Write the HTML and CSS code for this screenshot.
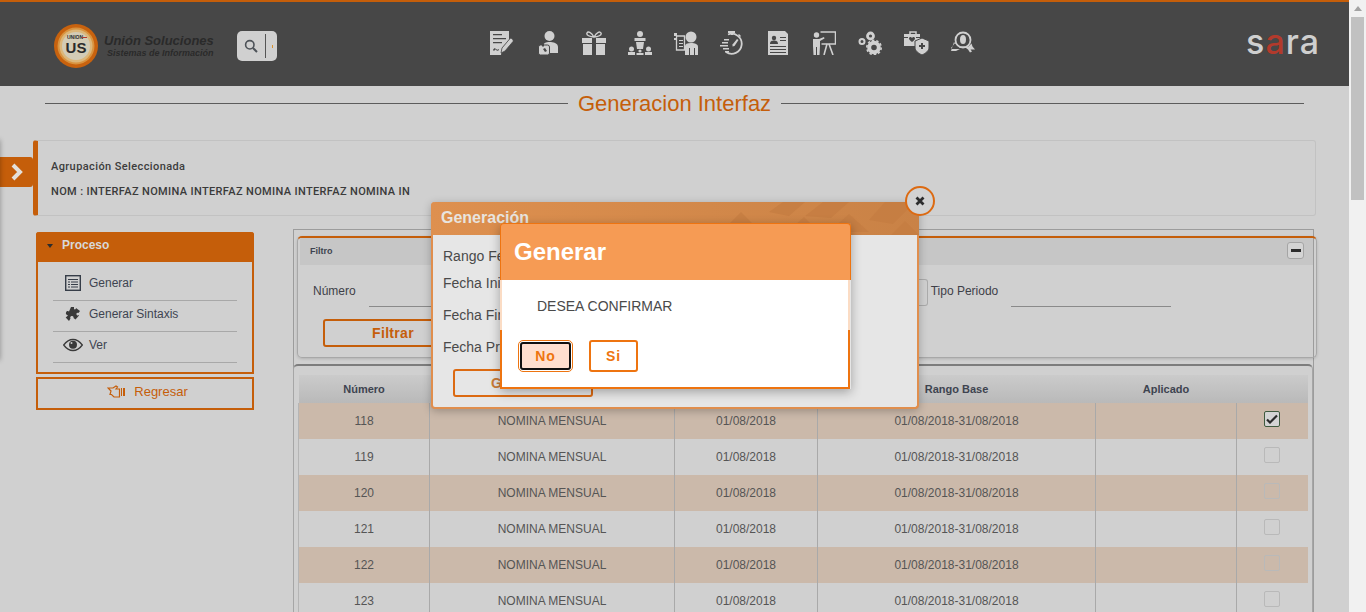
FILE: index.html
```html
<!DOCTYPE html>
<html lang="es">
<head>
<meta charset="utf-8">
<title>Generacion Interfaz</title>
<link rel="stylesheet" href="styles.css">
</head>
<body>
<div class="page">
  <header class="topbar">
    <div class="brand">
      <svg class="brand-mark" width="46" height="46" viewBox="0 0 46 46">
        <circle cx="23" cy="23" r="22" fill="#c8620e"/>
        <circle cx="23" cy="23" r="18.500" fill="#d9933f"/>
        <circle cx="23" cy="23" r="16.500" fill="#dcb77a"/>
        <circle cx="23" cy="23" r="14" fill="#d3ccb6"/>
        <text x="22" y="15.500" class="mark-small">UNION</text>
        <path d="M29 14h5v1h-5z" fill="#b33a2c"/>
        <text x="23" y="30" class="mark-big">US</text>
      </svg>
      <div class="brand-text">
        <div class="brand-name">Unión Soluciones</div>
        <div class="brand-sub">Sistemas de Información</div>
      </div>
    </div>
    <div class="search">
      <svg width="14" height="14" viewBox="0 0 14 14"><circle cx="5.800" cy="5.800" r="4.200" fill="none" stroke="#4d5258" stroke-width="1.600"/><path d="M9 9l4 4" stroke="#4d5258" stroke-width="2"/></svg>
      <span class="search-sep"></span>
      <span class="search-dot"></span>
    </div>
    <nav class="nav">
      <svg width="24" height="24" viewBox="0 0 24 24"><path class="ic" d="M0 0h19v9l-7 8-1 7H0z"/><path class="cut" d="M3 3h9v1.200H3zM3 7h13v1.200H3zM3 11h9v1.200H3zM3 19c1-2 2-2 3-1s2 1 3 0v1c-1 1-2 1-3 0s-1 0-2 1z"/><path class="ic" stroke="#474747" stroke-width=".8" d="M12 17L20 7.500c1-1 4 1.500 3 3L15 20l-4 2z"/></svg>
      <svg width="24" height="24" viewBox="0 0 24 24"><circle class="ic" cx="13.500" cy="5" r="5"/><path class="ic" d="M7 22V15c0-3 3-4 6.500-4s8.500 1 8.500 5v6z"/><rect x="2.500" y="14" width="11" height="10" rx="2" class="ic" stroke="#474747"/><path class="cut" d="M6 12.500h2v3H6zM7 18l2-1 2 3-2 1z"/></svg>
      <svg width="24" height="24" viewBox="0 0 24 24"><path class="ic" d="M0 7h10v5H0zM14 7h10v5H14zM1 13h9v11H1zM14 13h9v11H14z"/><path d="M12 6C9 1 6 0 5 2s3 4 7 4c4 0 8-2 7-4s-4-1-7 4z" fill="none" stroke="#d0d0d0" stroke-width="1.400"/></svg>
      <svg width="24" height="24" viewBox="0 0 24 24"><circle class="ic" cx="12" cy="3" r="3"/><path class="ic" d="M6.500 7h11v3h-11zM8 11h8l-1 7H9z"/><circle class="ic" cx="3.500" cy="18" r="2.500"/><circle class="ic" cx="20.500" cy="18" r="2.500"/><circle class="ic" cx="12" cy="20" r="1.600"/><path class="ic" d="M0 21h7v3H0zM8.500 22h7v2h-7zM17 21h7v3h-7z"/></svg>
      <svg width="24" height="24" viewBox="0 0 24 24"><circle class="ic" cx="17" cy="6" r="5.500"/><path class="ic" d="M11 24V15c0-2 2-3 6-3s7 1 7 4v8z"/><path d="M2.500 5h8v14h-8z" fill="none" stroke="#d0d0d0" stroke-width="1.300"/><path class="ic" d="M0 2h3v3H0zM0 7h3v2H0zM5 9h4v1H5zM5 12h4v1H5zM5 15h4v1H5z"/><path class="cut" d="M15 17h1v7h-1zM20 17h1v7h-1z"/></svg>
      <svg width="24" height="24" viewBox="0 0 24 24"><path d="M8 3.500A10 10 0 1 1 6 21" fill="none" stroke="#d0d0d0" stroke-width="1.800"/><path class="ic" d="M8 0h7v2H8zM11 2h2v2h-2zM19 3l2 2-1 1-2-2zM0 14h8v1.500H0zM2 11h6v1.500H2zM3 17h6v1.500H3zM4 8h5v1.500H4zM5 20h4v1.500H5z"/><path class="ic" d="M17 8l1.500 1-4 6-2 .5 0-2z"/></svg>
      <svg class="nav-narrow" width="20" height="24" viewBox="0 0 20 24"><path class="ic" d="M0 0h17l3 3v21H0z"/><circle class="cut" cx="6" cy="7" r="2.200"/><path class="cut" d="M2 13c0-3 2-3.500 4-3.500s4 .5 4 3.500zM12 6h6v1h-6zM12 9h6v1h-6zM2 15h16v1H2zM2 18h16v1H2zM2 21h16v1H2z"/></svg>
      <svg width="24" height="24" viewBox="0 0 24 24"><circle class="ic" cx="4.500" cy="4" r="2.700"/><path class="ic" d="M1 8h6l5-2 .5 1.500L8 10v5l-.5 9H5v-8H4v8H1.500L1 15z"/><path d="M8.500 1h15v12h-14" fill="none" stroke="#d0d0d0" stroke-width="1.500"/><path d="M15 13l-3 11M17 13l4 11" stroke="#d0d0d0" stroke-width="1.600"/></svg>
      <svg width="24" height="24" viewBox="0 0 24 24"><circle cx="12.500" cy="5" r="3" fill="none" stroke="#d0d0d0" stroke-width="2.800"/><circle cx="4" cy="10.500" r="2.500" fill="none" stroke="#d0d0d0" stroke-width="2"/><circle cx="16" cy="16.500" r="4.800" fill="none" stroke="#d0d0d0" stroke-width="4"/><circle cx="16" cy="16.500" r="7.200" fill="none" stroke="#d0d0d0" stroke-width="1.600" stroke-dasharray="2.500 2"/></svg>
      <svg width="25" height="24" viewBox="0 0 25 24"><path d="M6 3V1h6v2" fill="none" stroke="#d0d0d0" stroke-width="1.500"/><path class="ic" d="M0 3h16v12H0z"/><path class="cut" d="M8 11C6 9.500 5 8.500 5 7.500 5 6 7.200 5.500 8 7c.8-1.500 3-1 3 .5 0 1-1 2-3 3.500zM0 6h4v1H0zM12 6h4v1h-4z"/><path class="ic" stroke="#474747" d="M18 7l7 3v6c0 4-3 6-7 8-4-2-7-4-7-8v-6z"/><path class="cut" d="M17 12h2v2h2v2h-2v2h-2v-2h-2v-2h2z"/></svg>
      <svg width="24" height="24" viewBox="0 0 24 24"><circle cx="12" cy="9" r="7.500" fill="none" stroke="#d0d0d0" stroke-width="1.800"/><ellipse class="ic" cx="12" cy="8.500" rx="3" ry="4.500"/><path class="ic" d="M3 11l2.500 3 3.500 3h6l2 1.500 2 3 2-1-1.500-2H24l-2.500-3-1-3-3 3H7L4.500 11.500 0 17l1 1h5l3 0-4 2-5 0z"/></svg>
    </nav>
    <div class="sora">s<span class="sora-a">a</span>ra</div>
  </header>

  <div class="title-row">
    <span class="rule"></span>
    <h1 class="title">Generacion Interfaz</h1>
    <span class="rule"></span>
  </div>

  <section class="selection">
    <p class="sel-label">Agrupación Seleccionada</p>
    <p class="sel-value">NOM : INTERFAZ NOMINA INTERFAZ NOMINA INTERFAZ NOMINA IN</p>
  </section>

  <div class="content">
    <aside class="side">
      <div class="process">
        <div class="process-head"><span class="caret"></span>Proceso</div>
        <ul class="process-list">
          <li class="process-item">
            <svg width="16" height="16" viewBox="0 0 16 16"><rect x=".7" y=".7" width="14.600" height="14.600" fill="none" stroke="#363d48" stroke-width="1.400"/><path d="M3 4h10v1H3zM3 6.500h2v1H3zM6 6.500h7v1H6zM3 9h2v1H3zM6 9h7v1H6zM3 11.500h2v1H3zM6 11.500h7v1H6z" fill="#363d48"/></svg>
            Generar
          </li>
          <li class="process-item">
            <svg width="16" height="16" viewBox="0 0 16 16"><path d="M6 1l3 0 0 2c1 1 2 0 2-1l4 3-1.500 2c-1-.8-2.500 0-2 1.500s2 1 2.500.5l0 .5-3.500 4-2-1.500c.5-1-.5-2.500-2-2s-1.500 2-1 2.500L4 15 .7 11.500 3 9.500c-1-.5-2.700-1-2-3s2.500-1.500 3-1z" fill="#3a3a3a"/></svg>
            Generar Sintaxis
          </li>
          <li class="process-item">
            <svg class="eye" width="20" height="14" viewBox="0 0 20 14"><path d="M.7 7C4 2.500 7 1.500 10 1.500S16 2.500 19.300 7C16 11.500 13 12.500 10 12.500S4 11.500 .7 7z" fill="none" stroke="#3a3a3a" stroke-width="1.300"/><circle cx="10" cy="6.800" r="4" fill="#3a3a3a"/><circle cx="8.500" cy="5" r="1" fill="#ccc"/></svg>
            Ver
          </li>
        </ul>
      </div>
      <button class="back" type="button">
        <svg width="18" height="13" viewBox="0 0 18 13"><path d="M1 3h5l3-2 1.500 1L9 4h3.500v8H7L4.500 9.500H3L4 6z" fill="none" stroke="#c55e0a" stroke-width="1.200"/><path d="M14 3h1v8h-1zM16 3h2v8h-2z" fill="#c55e0a"/></svg>
        Regresar
      </button>
    </aside>

    <main class="work">
      <section class="filter">
        <div class="filter-head">
          <span class="filter-title">Filtro</span>
          <button class="collapse" type="button"><span class="minus"></span></button>
        </div>
        <div class="filter-row">
          <label class="f-label">Número</label>
          <span class="f-line f-line-num"></span>
          <span class="f-select"></span>
          <label class="f-label">Tipo Periodo</label>
          <span class="f-line f-line-tipo"></span>
        </div>
        <button class="filter-btn" type="button">Filtrar</button>
      </section>

      <section class="grid-panel">
        <table class="grid">
          <colgroup>
            <col class="c1"><col class="c2"><col class="c3"><col class="c4"><col class="c5"><col class="c6">
          </colgroup>
          <thead>
            <tr><th>Número</th><th></th><th></th><th>Rango Base</th><th>Aplicado</th><th></th></tr>
          </thead>
          <tbody>
            <tr class="alt"><td>118</td><td>NOMINA MENSUAL</td><td>01/08/2018</td><td>01/08/2018-31/08/2018</td><td></td><td><span class="check on"><svg width="12" height="10" viewBox="0 0 12 10"><path d="M1 5.500l3 3L11 1.500" fill="none" stroke="#2b2b2b" stroke-width="2.200"/></svg></span></td></tr>
            <tr><td>119</td><td>NOMINA MENSUAL</td><td>01/08/2018</td><td>01/08/2018-31/08/2018</td><td></td><td><span class="check"></span></td></tr>
            <tr class="alt"><td>120</td><td>NOMINA MENSUAL</td><td>01/08/2018</td><td>01/08/2018-31/08/2018</td><td></td><td><span class="check"></span></td></tr>
            <tr><td>121</td><td>NOMINA MENSUAL</td><td>01/08/2018</td><td>01/08/2018-31/08/2018</td><td></td><td><span class="check"></span></td></tr>
            <tr class="alt"><td>122</td><td>NOMINA MENSUAL</td><td>01/08/2018</td><td>01/08/2018-31/08/2018</td><td></td><td><span class="check"></span></td></tr>
            <tr><td>123</td><td>NOMINA MENSUAL</td><td>01/08/2018</td><td>01/08/2018-31/08/2018</td><td></td><td><span class="check"></span></td></tr>
          </tbody>
        </table>
      </section>
    </main>
  </div>

  <button class="side-tab" type="button"><svg width="14" height="18" viewBox="0 0 14 18"><path d="M3 2l7 7-7 7" fill="none" stroke="#e4e0da" stroke-width="4"/></svg></button>
  <span class="side-shadow"></span>

  <div class="dialog">
    <div class="dialog-head">
      <svg class="dialog-pattern" width="340" height="33" viewBox="0 0 340 33">
        <path d="M150 22l12-12 12 12-12 12zM190 10l14-10h22l-16 14zM226 14l18-14h26l-18 16zM250 30l20-18 20 18zM290 18l16-18h30l-22 22zM205 33l20-18 18 18zM312 33l14-14 14 14z" fill="#c47c42" opacity=".75"/>
      </svg>
      <span class="dialog-title">Generación</span>
    </div>
    <div class="dialog-body">
      <div class="dlg-line dlg-first">Rango Fecha</div>
      <div class="dlg-line">Fecha Inicio</div>
      <div class="dlg-line dlg-gap">Fecha Fin</div>
      <div class="dlg-line dlg-gap">Fecha Proceso</div>
      <button class="dlg-btn" type="button">Generar</button>
    </div>
  </div>
  <button class="dialog-close" type="button"><svg width="10" height="10" viewBox="0 0 10 10"><path d="M1.500 1.500l7 7M8.500 1.500l-7 7" stroke="#2d2d2d" stroke-width="2.800"/></svg></button>

  <div class="confirm">
    <div class="confirm-head">Generar</div>
    <div class="confirm-body">
      <p class="confirm-text">DESEA CONFIRMAR</p>
      <div class="confirm-actions">
        <button class="cbtn cbtn-focus" type="button">No</button>
        <button class="cbtn" type="button">Si</button>
      </div>
    </div>
  </div>
</div>
<div class="scrollbar">
  <span class="sb-arrow"></span>
  <span class="sb-thumb"></span>
</div>
</body>
</html>
```
FILE: styles.css
```css
* { box-sizing: border-box; }
html, body { margin: 0; height: 612px; overflow: hidden; }
body { display: flex; background: #d0d0d0; font-family: "Liberation Sans", Arial, sans-serif; color: #3c3c3c; }
p, h1, ul { margin: 0; padding: 0; }
button { font-family: inherit; padding: 0; background: none; }

.page { position: relative; width: 1349px; height: 612px; flex: none; overflow: hidden; }

.scrollbar { width: 17px; height: 612px; flex: none; background: #f1f1f1; display: flex; flex-direction: column; align-items: center; }
.sb-arrow { margin-top: 6px; border: 4px solid transparent; border-top: 0; border-bottom: 5px solid #a3a3a3; }
.sb-thumb { margin-top: 6px; width: 13px; height: 183px; background: #c1c1c1; }

.topbar { height: 86px; background: #474747; border-top: 2px solid #c55e0a; display: flex; align-items: flex-start; }
.brand { display: flex; margin: 21px 0 0 53px; width: 184px; }
.brand-mark { flex: none; }
.mark-small { font: bold 5px "Liberation Sans", sans-serif; fill: #2b2b2b; text-anchor: middle; }
.mark-big { font: bold 15px "Liberation Sans", sans-serif; fill: #2b2b2b; text-anchor: middle; }
.brand-text { margin: 10px 0 0 5px; color: #2a2a2a; font-style: italic; font-weight: bold; white-space: nowrap; }
.brand-name { font-size: 13px; line-height: 15px; }
.brand-sub { font-size: 9px; line-height: 10px; margin-left: 3px; }

.search { margin-top: 29px; width: 40px; height: 30px; background: #d0d0d0; border-radius: 5px; display: flex; align-items: center; padding-left: 7px; }
.search-sep { width: 1px; height: 24px; background: #555; margin-left: 7px; }
.search-dot { width: 1px; height: 3px; background: #d9902c; margin-left: 6px; }

.nav { display: flex; gap: 22px; align-items: center; margin: 29px 0 0 213px; height: 24px; }
.nav svg { flex: none; }
.nav .nav-narrow { margin: 0 2px; }
.ic { fill: #d0d0d0; }
.cut { fill: #474747; }

.sora { margin: 20px 29px 0 auto; font: 500 34px/40px Inter, "Liberation Sans", sans-serif; letter-spacing: 1px; color: #cfcfcf; }
.sora-a { color: #b33a2c; }

.title-row { display: flex; align-items: center; gap: 10px; padding: 0 45px; height: 35px; }
.rule { flex: 1; height: 1px; background: #5c5c5c; }
.title { font-size: 22px; font-weight: normal; color: #c55e0a; line-height: 35px; white-space: nowrap; }

.selection { margin: 19px 0 0 33px; width: 1283px; height: 76px; border: 1px solid #c2c2c2; border-left: 5px solid #c55e0a; border-radius: 3px; padding: 18px 0 0 13px; }
.sel-label { font: 500 11px/16px Roboto, sans-serif; letter-spacing: .4px; color: #3d3d3d; }
.sel-value { margin-top: 9px; font: 500 11px/16px Roboto, sans-serif; letter-spacing: .35px; color: #3a3a3a; }

.content { display: flex; gap: 39px; padding-left: 36px; margin-top: 13px; }
.side { width: 218px; flex: none; padding-top: 3px; }
.process { border: 2px solid #c55e0a; border-top: 0; height: 142px; border-radius: 3px 3px 0 0; }
.process-head { margin: 0 -2px; height: 30px; background: #c55e0a; color: #d8d8d8; font-weight: bold; font-size: 12px; line-height: 27px; padding-left: 11px; border-radius: 3px 3px 0 0; display: flex; align-items: flex-start; }
.caret { width: 0; height: 0; margin: 12px 9px 0 0; border: 3.500px solid transparent; border-top: 4px solid #2d2d2d; border-bottom: 0; }
.process-list { list-style: none; margin: 0 15px; padding-top: 8px; }
.process-item { height: 31px; border-bottom: 1px solid #a8a8a8; display: flex; align-items: center; gap: 8px; padding: 0 0 5px 12px; font-size: 12px; color: #3e4450; }
.process-item svg { flex: none; }
.process-item .eye { margin: 0 -2px; }
.back { display: flex; align-items: center; justify-content: center; gap: 9px; width: 218px; height: 33px; margin-top: 3px; border: 2px solid #c55e0a; color: #c55e0a; font-size: 13px; padding: 0 0 4px 5px; }

.work { width: 1021px; height: 420px; border: 1px solid #9c9c9c; border-bottom: 0; padding: 6px 0 0 3px; }
.filter { width: 1020px; height: 122px; border: 1px solid #a8a8a8; border-top: 2px solid #c55e0a; border-radius: 5px; box-shadow: 0 1px 3px rgba(0,0,0,.15); }
.filter-head { height: 27px; background: #c6c6c6; margin: 0 3px 0 2px; display: flex; align-items: center; justify-content: space-between; padding: 0 9px 2px 10px; }
.filter-title { font-size: 9px; font-weight: bold; color: #3e4450; }
.collapse { width: 17px; height: 17px; border: 1px solid #a5a5a5; border-radius: 3px; background: #d4d4d4; display: flex; align-items: center; justify-content: center; }
.minus { width: 10px; height: 3px; background: #2d2d2d; }
.filter-row { display: flex; align-items: flex-start; height: 54px; padding-left: 15px; }
.f-label { font-size: 12px; line-height: 14px; margin-top: 19px; color: #3e4048; white-space: nowrap; }
.f-line { height: 1px; background: #8a8a8a; margin-top: 41px; }
.f-line-num { width: 170px; margin-left: 13px; }
.f-select { width: 12px; height: 27px; border: 1px solid #ababab; border-left: 0; border-radius: 0 3px 3px 0; margin: 14px 3px 0 377px; }
.f-line-tipo { width: 160px; margin-left: 13px; }
.filter-btn { display: block; margin-left: 25px; width: 140px; height: 28px; border: 2px solid #c55e0a; border-radius: 3px; color: #c55e0a; font-weight: bold; font-size: 14px; letter-spacing: .3px; }

.grid-panel { width: 1020px; margin: 6px 0 0 -4px; border: 1px solid #a6a6a6; border-top: 2px solid #7d7d7d; border-radius: 5px 5px 0 0; padding: 9px 5px 0 4px; height: 280px; }
.grid { border-collapse: collapse; table-layout: fixed; width: 1009px; }
.c1 { width: 131px; } .c2 { width: 245px; } .c3 { width: 143px; } .c4 { width: 278px; } .c5 { width: 141px; } .c6 { width: 71px; }
.grid th { height: 28px; padding: 0; font-size: 11px; font-weight: bold; color: #3e4450; background: linear-gradient(#cbcbcb, #b9b9b9); }
.grid td { height: 36px; padding: 0; text-align: center; font-size: 12px; color: #555; border-left: 1px solid #a9a9a9; }
.grid td:first-child { border-left: 1px solid #b5b5b5; }
.grid tr.alt td { background: #cbb9aa; }
.check { display: inline-flex; align-items: center; justify-content: center; width: 16px; height: 16px; border: 1px solid #b9b9b9; border-radius: 2px; vertical-align: middle; margin-top: -6px; }
.check.on { border-color: #3f5a3f; background: #d4d4d4; }

.side-tab { position: absolute; left: 0; top: 157px; width: 33px; height: 30px; border: 0; background: #c55e0a; border-radius: 0 3px 3px 0; display: flex; align-items: center; justify-content: center; }
.side-shadow { position: absolute; left: -4px; top: 140px; width: 4px; height: 220px; box-shadow: 0 0 5px rgba(0,0,0,.35); }

.dialog { position: absolute; left: 431px; top: 202px; width: 488px; height: 207px; border: 2px solid #e08e4d; border-top: 0; border-radius: 4px; background: #e6e6e6; box-shadow: 0 2px 8px rgba(0,0,0,.25); }
.dialog-head { position: relative; margin: 0 -2px; height: 33px; background: linear-gradient(90deg, #de904f, #c98246); border-radius: 4px 4px 0 0; overflow: hidden; }
.dialog-pattern { position: absolute; right: 0; top: 0; }
.dialog-title { position: absolute; left: 10px; top: 7px; color: #e8e4df; font-weight: bold; font-size: 16px; }
.dialog-body { padding: 13px 0 0 10px; font-size: 14px; color: #4a4a4a; }
.dlg-line { line-height: 16px; white-space: nowrap; }
.dlg-line + .dlg-line { margin-top: 11px; }
.dlg-line.dlg-gap { margin-top: 16px; }
.dlg-btn { display: block; margin: 14px 0 0 10px; width: 140px; height: 28px; border: 2px solid #dc6a12; border-radius: 3px; color: #c97a36; font-weight: bold; font-size: 14px; letter-spacing: 1.500px; background: #e6e6e6; }

.dialog-close { position: absolute; left: 905px; top: 186px; width: 30px; height: 30px; border: 2px solid #dc6a12; border-radius: 50%; background: #d2d2d2; display: flex; align-items: center; justify-content: center; }

.confirm { position: absolute; left: 500px; top: 223px; width: 351px; height: 166px; box-shadow: 0 3px 10px rgba(0,0,0,.3); }
.confirm-head { height: 57px; background: #f69b54; border: 1px solid #ee7410; border-bottom: 0; border-radius: 4px 4px 0 0; color: #fff; font-weight: bold; font-size: 24px; line-height: 55px; padding-left: 13px; }
.confirm-body { width: 350px; height: 109px; background: #fff; border-style: solid; border-width: 0 2px 2px 2px; border-image: linear-gradient(#fbdcc4 0 51px, #ee7410 51px) 1; padding-top: 18px; }
.confirm-text { font-size: 14px; line-height: 17px; color: #4a4a4a; padding-left: 35px; }
.confirm-actions { display: flex; gap: 18px; margin: 25px 0 0 18px; align-items: center; }
.cbtn { width: 49px; height: 32px; border: 2px solid #ee7410; border-radius: 3px; background: #fff; color: #ee7410; font-weight: bold; font-size: 14px; letter-spacing: 1px; }
.cbtn-focus { width: 51px; height: 28px; background: #ffdfcf; border: 2px solid #111; outline: 1px solid #ee7410; outline-offset: 1px; }
```
